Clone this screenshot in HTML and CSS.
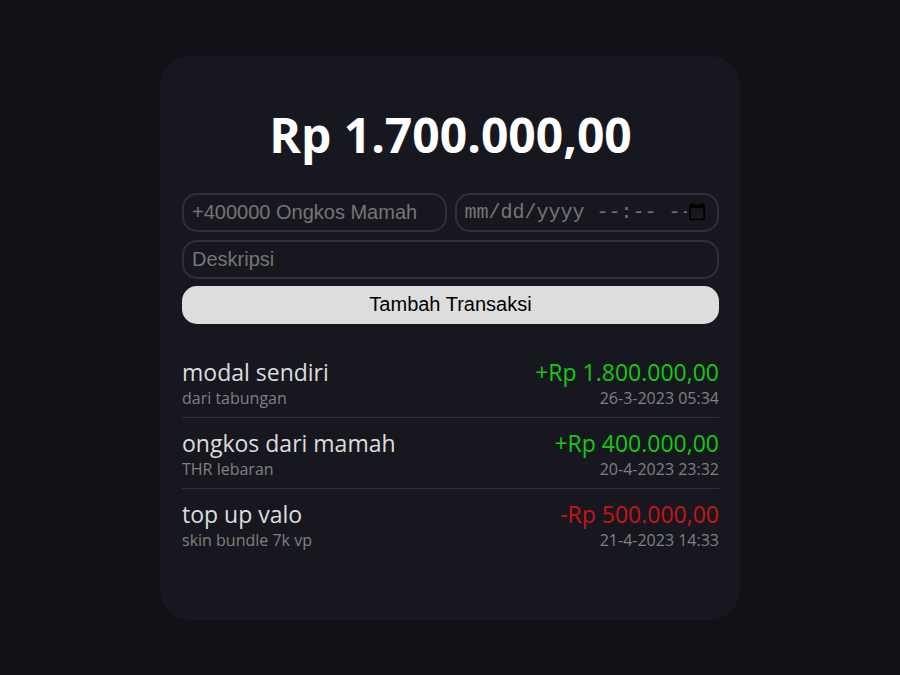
FILE: index.html
```html
<!DOCTYPE html>
<html lang="id">
<head>
<meta charset="utf-8">
<meta name="viewport" content="width=device-width, initial-scale=1">
<title>Transaksi</title>
<link rel="stylesheet" href="styles.css">
</head>
<body>
<main class="card">
  <h1 class="balance">Rp 1.700.000,00</h1>
  <form class="form">
    <div class="fields">
      <div class="form-row">
        <input class="field" type="text" aria-label="Transaksi" placeholder="+400000 Ongkos Mamah">
        <div class="date">
          <input class="field field-date" id="date" type="datetime-local" aria-label="Tanggal">
          <label class="date-hint" for="date">mm/dd/yyyy --:-- --</label>
        </div>
      </div>
      <input class="field" type="text" aria-label="Deskripsi" placeholder="Deskripsi">
    </div>
    <button class="submit" type="submit">Tambah Transaksi</button>
  </form>
  <ul class="list">
    <li class="item">
      <div class="line"><span>modal sendiri</span><span class="income">+Rp 1.800.000,00</span></div>
      <div class="line detail"><span>dari tabungan</span><time>26-3-2023 05:34</time></div>
    </li>
    <li class="item">
      <div class="line"><span>ongkos dari mamah</span><span class="income">+Rp 400.000,00</span></div>
      <div class="line detail"><span>THR lebaran</span><time>20-4-2023 23:32</time></div>
    </li>
    <li class="item">
      <div class="line"><span>top up valo</span><span class="expense">-Rp 500.000,00</span></div>
      <div class="line detail"><span>skin bundle 7k vp</span><time>21-4-2023 14:33</time></div>
    </li>
  </ul>
</main>
</body>
</html>
```
FILE: styles.css
```css
* { box-sizing: border-box; }
body {
  margin: 0;
  min-height: 100vh;
  display: flex;
  align-items: center;
  justify-content: center;
  background: #111217;
  color: #ddd;
  font-family: "Segoe UI", "Open Sans", "Noto Sans", sans-serif;
}
.card {
  width: 100%;
  max-width: 580px;
  padding: 46px 21px 61px 22px;
  border-radius: 30px;
  background: #17181f;
}
.balance {
  margin: 0 0 26px;
  color: #fff;
  font-size: 48px;
  line-height: 65px;
  text-align: center;
}
.form { display: grid; gap: 7px; }
.fields { display: grid; gap: 8px; }
.form-row { display: grid; grid-template-columns: repeat(2, minmax(0, 1fr)); gap: 8px; }
.field {
  width: 100%;
  min-width: 0;
  height: 39px;
  padding: 0 8px;
  border: 2px solid #30303c;
  border-radius: 15px;
  background: transparent;
  color: #757575;
  font: 20px "Liberation Sans", sans-serif;
}
.field::placeholder { color: #757575; }
.date { position: relative; }
.field-date { display: block; }
.field-date:not(:focus)::-webkit-datetime-edit { opacity: 0; }
.date-hint {
  position: absolute;
  inset: 2px 32px 2px 10px;
  overflow: hidden;
  color: #757575;
  font: 20px/35px "Liberation Mono", monospace;
  white-space: nowrap;
  pointer-events: none;
}
.field-date:focus + .date-hint { display: none; }
.submit {
  height: 38px;
  border: 0;
  border-radius: 15px;
  background: #ddd;
  color: #000;
  font: 20px "Liberation Sans", sans-serif;
}
.list { margin: 23px 0 0; padding: 0; list-style: none; }
.item { padding: 10px 0 9px; }
.item + .item { border-top: 1px solid #30303c; }
.line { display: flex; justify-content: space-between; font-size: 23px; line-height: 31px; }
.detail { color: #808080; font-size: 16px; line-height: 20px; }
.income { color: #14c814; }
.expense { color: #c81414; }
```
